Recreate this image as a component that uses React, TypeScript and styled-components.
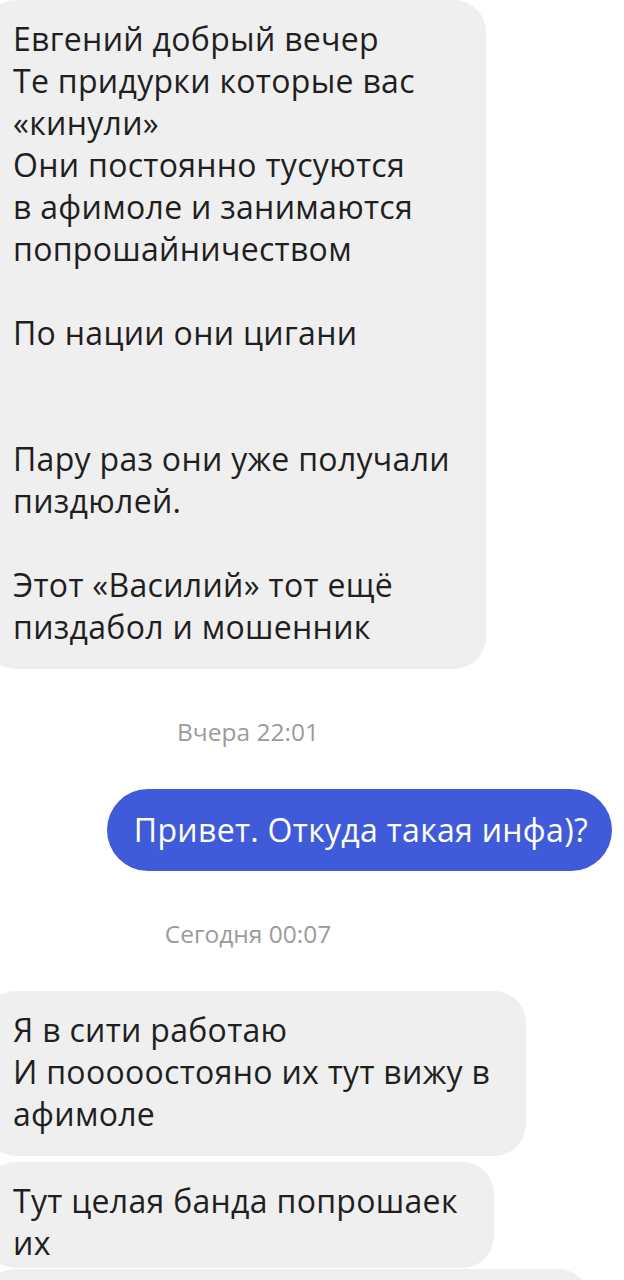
import React from "react";
import styled, { createGlobalStyle } from "styled-components";

const GlobalStyle = createGlobalStyle`
  html, body {
    margin: 0;
    padding: 0;
    background: #ffffff;
  }
  body {
    font-family: "Open Sans", Roboto, "Liberation Sans", sans-serif;
  }
`;

type Item =
  | { kind: "in" | "out"; lines: string[]; cut?: boolean; width?: number }
  | { kind: "stamp"; text: string };

const items: Item[] = [
  {
    kind: "in",
    lines: [
      "Евгений добрый вечер",
      "Те придурки которые вас",
      "«кинули»",
      "Они постоянно тусуются",
      "в афимоле и занимаются",
      "попрошайничеством",
      "",
      "По нации они цигани",
      "",
      "",
      "Пару раз они уже получали",
      "пиздюлей.",
      "",
      "Этот «Василий» тот ещё",
      "пиздабол и мошенник",
    ],
  },
  { kind: "stamp", text: "Вчера 22:01" },
  { kind: "out", lines: ["Привет. Откуда такая инфа)?"] },
  { kind: "stamp", text: "Сегодня 00:07" },
  {
    kind: "in",
    lines: ["Я в сити работаю", "И пооооостояно их тут вижу в", "афимоле"],
  },
  { kind: "in", lines: ["Тут целая банда попрошаек", "их"], cut: true },
  // next bubble only peeks in at the bottom edge
  { kind: "in", lines: [""], width: 606 },
];

const App = () => {
  return (
    <>
      <GlobalStyle />
      <Screen>
        <Thread>
          {items.map((item, i) => {
            if (item.kind === "stamp") {
              return <Stamp key={i}>{item.text}</Stamp>;
            }
            const next = items[i + 1];
            const grouped = !!next && next.kind === item.kind;
            return (
              <Bubble
                key={i}
                $out={item.kind === "out"}
                $grouped={grouped}
                $cut={!!item.cut}
                $width={item.width}
              >
                {item.lines.map((line, j) => (
                  <Line key={j}>{line || "\u00a0"}</Line>
                ))}
              </Bubble>
            );
          })}
        </Thread>
      </Screen>
    </>
  );
};

export default App;

// =================================================================

const Screen = styled.div`
  width: 624px;
  height: 1280px;
  overflow: hidden;
  background: #ffffff;
`;

const Thread = styled.div`
  display: flex;
  flex-direction: column;
  padding: 0 12px 0 0;
`;

const Bubble = styled.div<{
  $out: boolean;
  $grouped: boolean;
  $cut: boolean;
  $width?: number;
}>`
  align-self: ${(p) => (p.$out ? "flex-end" : "flex-start")};
  width: ${(p) => (p.$width ? `${p.$width}px` : "fit-content")};
  box-sizing: border-box;
  flex-shrink: 0;
  margin-left: ${(p) => (p.$out ? "0" : "-16px")};
  margin-bottom: ${(p) => (p.$grouped ? (p.$cut ? "1px" : "6px") : "0")};
  padding: ${(p) =>
    p.$out ? "20px 24px 20px 27px" : `18px 36px ${p.$cut ? "4px" : "21px"} 29px`};
  border-radius: ${(p) => (p.$out ? "41px" : "32px")};
  background: ${(p) => (p.$out ? "#3f5bd9" : "#efefef")};
  color: ${(p) => (p.$out ? "#ffffff" : "#1f1f1f")};
  font-size: 32px;
  letter-spacing: 0.3px;
  line-height: 42px;
  white-space: nowrap;
  overflow: hidden;
`;

const Line = styled.div`
  min-height: 42px;
`;

const Stamp = styled.div`
  align-self: center;
  margin: 48px 0 42px;
  padding-right: 116px;
  font-size: 24.5px;
  line-height: 30px;
  color: #9b9b9b;
`;
